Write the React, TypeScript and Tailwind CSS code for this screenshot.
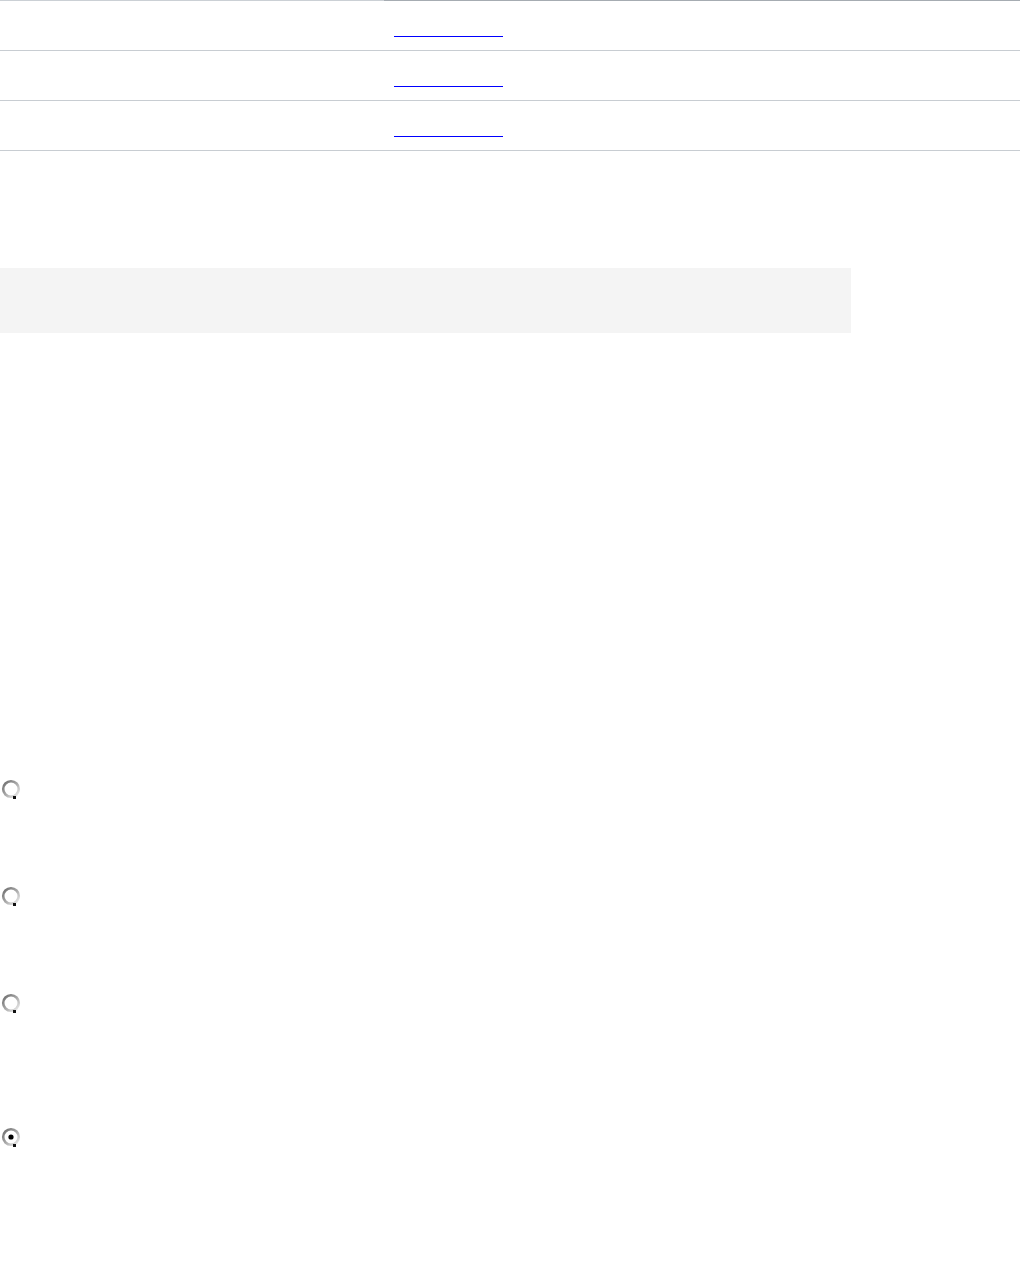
import React from 'react';

function Radio({ checked = false }: { checked?: boolean }) {
    const id = checked ? 'rg-on' : 'rg-off';
    return (
        <svg width="22" height="22" viewBox="0 0 22 22" className="block">
            <defs>
                <linearGradient id={id} x1="0" y1="0" x2="1" y2="1">
                    <stop offset="0" stopColor="#6a6a6a" />
                    <stop offset="0.5" stopColor="#a8a8a8" />
                    <stop offset="1" stopColor="#f2f2f2" />
                </linearGradient>
            </defs>
            <circle cx="11" cy="10" r="7.8" fill="#fff" stroke={`url(#${id})`} strokeWidth="2.6" />
            <rect x="13" y="17" width="3" height="3" fill="#111" />
            {checked && <circle cx="11" cy="10" r="2.6" fill="#000" />}
        </svg>
    );
}

function Row({ first = false }: { first?: boolean }) {
    return (
        <div className={`grid grid-cols-[384px_1fr] border-b border-[#c8cdd2] ${first ? 'h-[51px]' : 'h-[50px]'}`}>
            <div className={first ? 'border-t border-[#cbd0d5]' : ''} />
            <div className={`pl-[10px] pt-[35px] ${first ? 'border-t border-[#a6acb2]' : ''}`}>
                <a href="#" className="block w-[109px] h-px bg-[#0000ff]" />
            </div>
        </div>
    );
}

export default function App() {
    return (
        <div className="w-[1021px] min-h-[1266px] bg-white font-['Liberation_Sans',sans-serif]">
            <div className="w-[1020px]">
                <Row first />
                <Row />
                <Row />
            </div>

            <div className="mt-[117px] w-[851px] h-[65px] bg-[#f4f4f4]" />

            <div className="mt-[446px] flex flex-col">
                <div className="h-[107px]"><Radio /></div>
                <div className="h-[107px]"><Radio /></div>
                <div className="h-[134px]"><Radio /></div>
                <div><Radio checked /></div>
            </div>
        </div>
    );
}
